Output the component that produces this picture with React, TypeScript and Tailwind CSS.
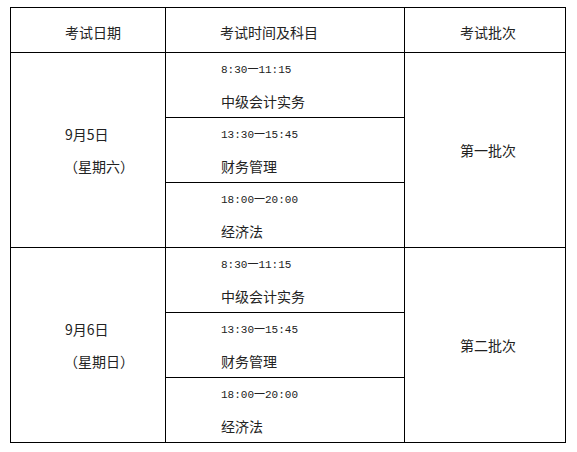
const CJK = "font-['SimSun','Noto_Sans_CJK_SC',sans-serif]";

const DAYS = [
  { date: "9月5日", week: "（星期六）", batch: "第一批次" },
  { date: "9月6日", week: "（星期日）", batch: "第二批次" },
];

const SESSIONS = [
  { time: "8:30一11:15", subject: "中级会计实务" },
  { time: "13:30一15:45", subject: "财务管理" },
  { time: "18:00一20:00", subject: "经济法" },
];

export default function App() {
  return (
    <div className={`min-h-[452px] bg-white pl-[10px] pt-[7px] text-[14px] text-[#222] ${CJK}`}>
      <div className="grid w-fit grid-cols-[154px_238px_160px] grid-rows-[44px_repeat(6,64px)] gap-px bg-black p-px">
        <div className="flex items-center bg-white pl-[54px] pt-1">考试日期</div>
        <div className="flex items-center bg-white pl-[54px] pt-1">考试时间及科目</div>
        <div className="flex items-center bg-white pl-[55px] pt-1">考试批次</div>

        {DAYS.map((d) => (
          <div key={d.date} className="contents">
            <div className="row-span-3 flex flex-col justify-center bg-white pl-[54px] leading-[32px]">
              <div>{d.date}</div>
              <div className="-ml-[1px]">{d.week}</div>
            </div>
            <div className="bg-white pl-[55px] pt-[2px] leading-[31px]">
              <div className="font-['Liberation_Mono','Noto_Sans_CJK_SC',monospace] text-[11px]">{SESSIONS[0].time}</div>
              <div>{SESSIONS[0].subject}</div>
            </div>
            <div className="row-span-3 flex items-center bg-white pl-[55px]">{d.batch}</div>
            {SESSIONS.slice(1).map((s) => (
              <div key={s.time} className="col-start-2 bg-white pl-[55px] pt-[2px] leading-[31px]">
                <div className="font-['Liberation_Mono','Noto_Sans_CJK_SC',monospace] text-[11px]">{s.time}</div>
                <div>{s.subject}</div>
              </div>
            ))}
          </div>
        ))}
      </div>
    </div>
  );
}
